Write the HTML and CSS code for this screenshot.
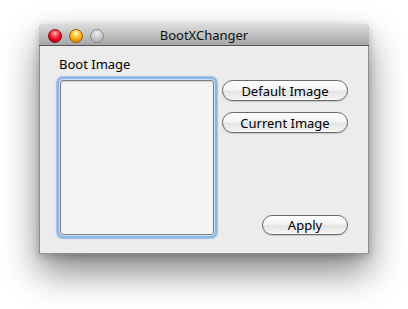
FILE: index.html
```html
<!DOCTYPE html>
<html>
<head>
<meta charset="utf-8">
<link rel="stylesheet" href="styles.css">
</head>
<body>
<div class="window">
  <div class="titlebar">
    <div class="lights">
      <span class="light red"></span>
      <span class="light orange"></span>
      <span class="light gray"></span>
    </div>
    <div class="title">BootXChanger</div>
  </div>
  <div class="content">
    <div class="label">Boot Image</div>
    <div class="row">
      <div class="well"></div>
      <div class="side">
        <button class="btn wide">Default Image</button>
        <button class="btn wide">Current Image</button>
        <button class="btn apply">Apply</button>
      </div>
    </div>
  </div>
</div>
</body>
</html>
```
FILE: styles.css
```css
html, body {
  margin: 0;
  padding: 0;
  background: #ffffff;
}
html {
  height: 100%;
}
body {
  box-sizing: border-box;
  min-height: 309px;
  height: 100%;
  padding: 24px 0 0 39px;
  font-family: "Noto Sans", "DejaVu Sans", sans-serif;
  font-size: 13px;
  color: #000;
  overflow: hidden;
}
.window {
  box-sizing: border-box;
  width: 330px;
  height: 230px;
  background: #ececec;
  border: 1px solid #8e8e8e;
  border-top: none;
  border-radius: 5px 5px 0 0;
  box-shadow: 0 18px 36px rgba(0,0,0,0.48), 0 3px 10px rgba(0,0,0,0.22);
  display: flex;
  flex-direction: column;
}
.titlebar {
  position: relative;
  box-sizing: border-box;
  height: 22px;
  margin: 0 -1px;
  border-radius: 5px 5px 0 0;
  background: linear-gradient(#dcdcdc, #c2c2c2 50%, #a6a6a6);
  border-bottom: 1px solid #555555;
  display: flex;
  align-items: center;
  justify-content: center;
}
.lights {
  position: absolute;
  left: 9px;
  top: 5px;
  display: flex;
  gap: 7px;
}
.light {
  box-sizing: border-box;
  width: 14px;
  height: 14px;
  border-radius: 50%;
}
.red {
  background: radial-gradient(circle at 50% 28%, #ffd8d8 0, #ff5f66 22%, #e1001f 60%, #a00012 100%);
  border: 1px solid #8a0e14;
}
.orange {
  background: radial-gradient(circle at 50% 28%, #fff6c8 0, #ffcf55 28%, #f59c00 65%, #b56a00 100%);
  border: 1px solid #9a6000;
}
.gray {
  background: radial-gradient(circle at 50% 28%, #f0f0f0 0, #cfcfcf 40%, #a8a8a8 100%);
  border: 1px solid #8d8d8d;
}
.title {
  font-size: 13px;
  line-height: 16px;
  color: #111;
  padding-top: 1px;
}
.content {
  padding: 10px 20px 0 20px;
  display: flex;
  flex-direction: column;
}
.label {
  line-height: 16px;
  margin-left: -1px;
}
.row {
  margin-top: 8px;
  display: flex;
  gap: 8px;
}
.well {
  box-sizing: border-box;
  width: 154px;
  height: 155px;
  background: #f4f4f4;
  border: 1px solid #7e7e7e;
  border-radius: 3px;
  box-shadow: inset 0 1px 1px rgba(0,0,0,0.15), 0 0 0 1px #cde0f4, 0 0 0 3px #86b7e8, 0 0 1px 4px rgba(110,165,225,0.6);
}
.side {
  display: flex;
  flex-direction: column;
  align-items: flex-end;
  width: 126px;
}
.btn {
  box-sizing: border-box;
  height: 21px;
  padding: 0;
  font-family: "Noto Sans", "DejaVu Sans", sans-serif;
  font-size: 13px;
  line-height: 18px;
  color: #000;
  border: 1px solid #6a6a6a;
  border-radius: 11px;
  background: linear-gradient(#ffffff, #f4f4f4 45%, #e4e4e4 55%, #f6f6f6);
  box-shadow: 0 1px 1px rgba(0,0,0,0.15);
}
.wide {
  width: 126px;
}
.wide + .wide {
  margin-top: 11px;
}
.apply {
  width: 86px;
  height: 20px;
  margin-top: auto;
}
```
